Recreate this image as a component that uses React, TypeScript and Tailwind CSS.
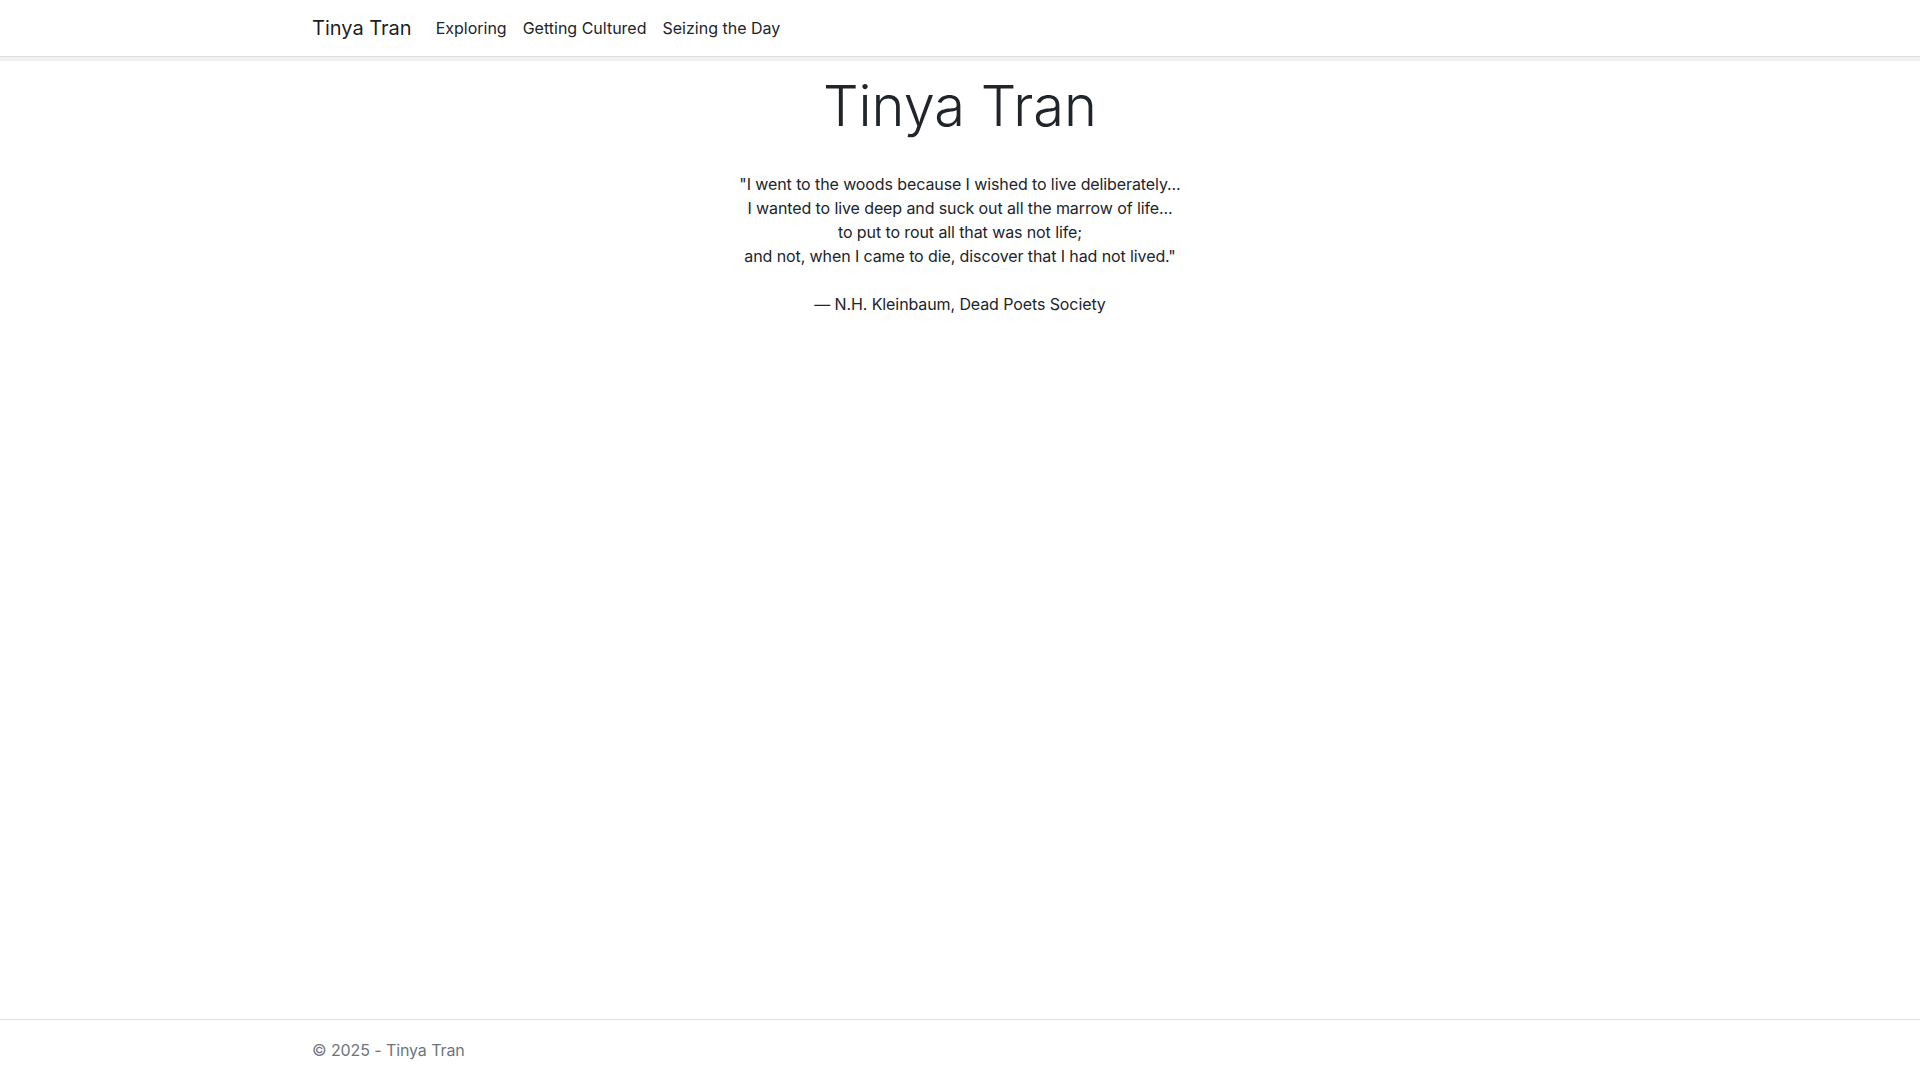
const quote = [
  '"I went to the woods because I wished to live deliberately...',
  "I wanted to live deep and suck out all the marrow of life...",
  "to put to rout all that was not life;",
  'and not, when I came to die, discover that I had not lived."',
];

const links = ["Exploring", "Getting Cultured", "Seizing the Day"];

export default function App() {
  return (
    <div className="flex min-h-screen flex-col bg-white font-['Inter','Liberation_Sans',sans-serif] text-base leading-normal text-[#212529]">
      <header className="mb-4 border-b border-[#dcdde1] bg-white shadow-[0_4px_1px_rgba(20,20,40,0.06)]">
        <nav className="mx-auto flex w-[1320px] items-center px-3 py-2">
          <a href="#" className="mr-4 py-[5px] text-xl text-[rgba(0,0,0,0.9)]">
            Tinya Tran
          </a>
          <ul className="flex items-center">
            {links.map((l) => (
              <li key={l}>
                <a href="#" className="block px-2 py-2 text-[#212529]">
                  {l}
                </a>
              </li>
            ))}
          </ul>
        </nav>
      </header>

      <main className="mx-auto w-[1320px] px-3 pb-4 text-center">
        <h1 className="mb-2 text-[56px] font-light leading-[1.2]">Tinya Tran</h1>
        <p className="mt-8 tracking-[-0.1px]">
          {quote.map((line) => (
            <span key={line} className="block">
              {line}
            </span>
          ))}
        </p>
        <p className="mt-6 tracking-[-0.1px]">— N.H. Kleinbaum, Dead Poets Society</p>
      </main>

      <footer className="mt-auto border-t border-[#dee2e6] leading-[60px] whitespace-nowrap text-[#6c757d]">
        <div className="mx-auto w-[1320px] px-3 tracking-[-0.1px]">© 2025 - Tinya Tran</div>
      </footer>
    </div>
  );
}
